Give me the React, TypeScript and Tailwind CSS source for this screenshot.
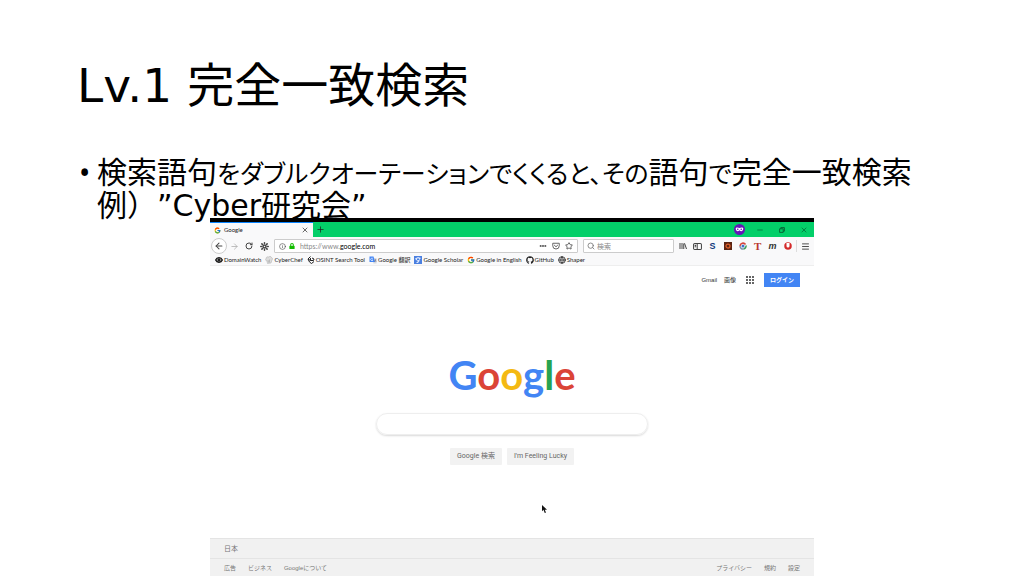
import type { ReactNode } from 'react'
import {
  ArrowLeft,
  ArrowRight,
  Ellipsis,
  Eye,
  Globe,
  Info,
  Menu,
  Minus,
  PanelLeft,
  Plus,
  RotateCw,
  Search,
  Star,
  Sun,
  X,
} from 'lucide-react'
import { FaGithub, FaLock } from 'react-icons/fa'
import { FcGoogle } from 'react-icons/fc'

const PocketIcon = () => (
  <svg viewBox="0 0 16 16" className="size-2" fill="none" stroke="#555" strokeWidth="1.8">
    <path d="M1.5 2.5h13v5a6.5 6.5 0 0 1-13 0z" strokeLinejoin="round" />
    <path d="M4.8 6.5 8 9.5l3.2-3" strokeLinecap="round" />
  </svg>
)

const LibraryIcon = () => (
  <svg viewBox="0 0 16 16" className="size-2" fill="none" stroke="#444" strokeWidth="2">
    <path d="M2 2v12M6 2v12M9.500 3v11M11 2.500 15 14" />
  </svg>
)

const SidebarIcon = () => (
  <svg viewBox="0 0 16 16" className="size-[9px]" fill="none" stroke="#444" strokeWidth="1.8">
    <rect x="1" y="2.500" width="14" height="11" rx="2" />
    <path d="M7.500 3v10M3 6h2.500M3 8.500h2.500" />
  </svg>
)

const HatIcon = () => (
  <svg viewBox="0 0 16 16" className="size-2">
    <path d="M2 5a3.500 3.500 0 0 1 5-3 3.500 3.500 0 0 1 6 1 3 3 0 0 1 1 5l-2 6-7 1-1-5a3 3 0 0 1-2-5z" fill="#ddd" stroke="#aaa" />
    <path d="m6 8 1 5M9 7v6" stroke="#999" />
  </svg>
)

const OsintIcon = () => (
  <svg viewBox="0 0 16 16" className="size-2" fill="none" stroke="#222" strokeWidth="2">
    <path d="M7 1 2 6l3 6 4 3 5-4" />
    <path d="M7 4v5h6l1-3-4-2" />
    <path d="m2 6 5 3" />
  </svg>
)

const TranslateIcon = () => (
  <svg viewBox="0 0 16 16" className="size-2">
    <path d="M6 4h9v11H9z" fill="#d5d9e0" />
    <path d="M1 1h8l3 11H1z" fill="#4285f4" />
    <path d="M8 5.500A2.500 2.500 0 1 0 8 8H5.500" fill="none" stroke="#fff" strokeWidth="1.300" />
    <path d="M11 8h4m-2-1.500V8c0 2-1 3-2 4m1-3 3 3" fill="none" stroke="#667" />
  </svg>
)

const ScholarIcon = () => (
  <svg viewBox="0 0 16 16" className="size-2">
    <path d="M0 0h16v16H0z" fill="#4b80e0" />
    <path d="M2 5 8 2l6 2-3 3v3l-3 4H4l4-4-4-2z" fill="#dce8ff" />
    <path d="M6 5h4v3H6z" fill="#4b80e0" />
  </svg>
)

const MaskIcon = () => (
  <svg viewBox="0 0 22 22" className="size-[11px]">
    <circle cx="11" cy="11" r="11" fill="#6514b8" />
    <path d="M3.500 9c0-3 5-2.500 7.500-1 2.500-1.500 7.500-2 7.500 1 0 6-5 7-7.500 3.500C8.500 16 3.500 15 3.500 9z" fill="#fff" />
    <circle cx="7.500" cy="10.500" r="1.600" fill="#6514b8" />
    <circle cx="14.500" cy="10.500" r="1.600" fill="#6514b8" />
  </svg>
)

const TargetIcon = () => (
  <svg viewBox="0 0 16 16" className="size-2">
    <path d="M0 0h16v16H0z" fill="#5b2412" />
    <circle cx="8" cy="8" r="4" fill="none" stroke="#e0602a" strokeWidth="2.500" />
  </svg>
)

const SwirlIcon = () => (
  <svg viewBox="0 0 16 16" className="size-2" fill="none" strokeWidth="3">
    <path d="M2 8a6 6 0 0 1 11-3" stroke="#d6453d" />
    <path d="M14 7a6 6 0 0 1-5 7" stroke="#3a9a56" />
    <path d="M9 14a6 6 0 0 1-7-6" stroke="#7a8fa8" />
    <circle cx="8" cy="8" r="3" fill="#3f6fc9" />
  </svg>
)

const RedRingIcon = () => (
  <svg viewBox="0 0 16 16" className="size-2">
    <circle cx="8" cy="8" r="7.500" fill="#d42a2a" />
    <path d="M5 2h6v6a3 3 0 0 1-6 0z" fill="#fff" />
  </svg>
)

const AppsIcon = () => (
  <svg viewBox="0 0 8 8" className="size-2" fill="#666">
    {[0, 3, 6].map((y) => [0, 3, 6].map((x) => <path key={`${x}${y}`} d={`M${x} ${y}h2v2h-2z`} />))}
  </svg>
)

const bookmarks: { label: string; icon: ReactNode }[] = [
  { label: 'DomainWatch', icon: <Eye className="size-2" color="#111" strokeWidth={4} /> },
  { label: 'CyberChef', icon: <HatIcon /> },
  { label: 'OSINT Search Tool', icon: <OsintIcon /> },
  { label: 'Google 翻訳', icon: <TranslateIcon /> },
  { label: 'Google Scholar', icon: <ScholarIcon /> },
  { label: 'Google in English', icon: <FcGoogle className="size-2" /> },
  { label: 'GitHub', icon: <FaGithub className="size-2" /> },
  { label: 'Shaper', icon: <Globe className="size-2" color="#444" strokeWidth={3} /> },
]

function IconButton({ label, children }: { label: string; children: ReactNode }) {
  return (
    <button type="button" aria-label={label} className="flex size-[15px] shrink-0 items-center justify-center">
      {children}
    </button>
  )
}

function TabBar() {
  return (
    <div className="flex h-[15px] items-center bg-[#03cf69]">
      <div className="flex h-full w-[103px] items-center gap-[3px] border-t border-[#0a84ff] bg-[#f9f9fa] pl-1">
        <FcGoogle className="size-[7px]" />
        <span className="flex-1">Google</span>
        <IconButton label="タブを閉じる">
          <X className="size-2" strokeWidth={2} />
        </IconButton>
      </div>
      <IconButton label="新しいタブ">
        <Plus className="size-[9px]" strokeWidth={2} />
      </IconButton>
      <div className="ml-auto flex items-center gap-[7px] pr-[3px] text-[#075c32]">
        <MaskIcon />
        <IconButton label="最小化">
          <Minus className="size-2" strokeWidth={2} />
        </IconButton>
        <IconButton label="元に戻す">
          <svg viewBox="0 0 10 10" className="size-[6px]" fill="none" stroke="currentColor" strokeWidth="1.500">
            <path d="M1 3h6v6H1zM3 3V1h6v6H7" />
          </svg>
        </IconButton>
        <IconButton label="閉じる">
          <X className="size-2" strokeWidth={2} />
        </IconButton>
      </div>
    </div>
  )
}

function NavBar() {
  return (
    <div className="flex h-[18px] items-center bg-[#f9f9fa] pr-[1px] pl-[1px] text-[#444]">
      <button
        type="button"
        aria-label="戻る"
        className="flex size-4 shrink-0 items-center justify-center rounded-full border border-[#ccc] bg-white"
      >
        <ArrowLeft className="size-[10px]" strokeWidth={2.5} />
      </button>
      <IconButton label="進む">
        <ArrowRight className="size-[9px] text-[#aaa]" strokeWidth={2} />
      </IconButton>
      <IconButton label="再読み込み">
        <RotateCw className="size-2" strokeWidth={3} />
      </IconButton>
      <IconButton label="設定">
        <Sun className="size-[9px]" strokeWidth={4} />
      </IconButton>

      {/* Address bar */}
      <div className="ml-[2px] flex h-[14px] flex-1 items-center rounded-[1px] border border-[#ccc] bg-white px-1">
        <Info className="size-[7px]" strokeWidth={2} />
        <FaLock className="mx-[3px] size-[6px] text-[#12bc00]" />
        <span className="pl-[2px] text-[7px] text-[#888]">
          https://www.<span className="text-black">google.com</span>
        </span>
        <div className="ml-auto flex items-center gap-[5px]">
          <Ellipsis className="size-2" strokeWidth={4} />
          <PocketIcon />
          <Star className="size-2" strokeWidth={2.5} />
        </div>
      </div>

      <label className="mr-[1px] ml-[5px] flex h-[14px] w-[91px] items-center gap-[2px] rounded-[1px] border border-[#ccc] bg-white pl-[3px]">
        <Search className="size-2 shrink-0 text-[#777]" strokeWidth={2.5} />
        <input aria-label="検索" placeholder="検索" className="w-full min-w-0 text-[7px] outline-none placeholder:text-[#888]" />
      </label>

      <div className="flex items-center">
        <IconButton label="ライブラリー">
          <LibraryIcon />
        </IconButton>
        <IconButton label="サイドバー">
          <SidebarIcon />
        </IconButton>
        <IconButton label="S">
          <span className="font-['Liberation_Sans',sans-serif] text-[9px] font-bold text-[#123a7c]">S</span>
        </IconButton>
        <IconButton label="ターゲット">
          <TargetIcon />
        </IconButton>
        <IconButton label="カラー">
          <SwirlIcon />
        </IconButton>
        <IconButton label="T">
          <span className="font-['Liberation_Serif',serif] text-[11px] font-bold text-[#b9382f]">T</span>
        </IconButton>
        <IconButton label="m">
          <span className="font-['Liberation_Sans',sans-serif] text-[9px] font-bold text-[#333] italic">m</span>
        </IconButton>
        <IconButton label="ブロック">
          <RedRingIcon />
        </IconButton>
        <div className="mx-[1px] h-3 w-px bg-[#ddd]" />
        <IconButton label="メニュー">
          <Menu className="size-[9px]" strokeWidth={2.5} />
        </IconButton>
      </div>
    </div>
  )
}

function GooglePage() {
  return (
    <div className="flex flex-1 flex-col bg-white font-['Liberation_Sans','Noto_Sans_CJK_JP',sans-serif]">
      <div className="flex h-7 items-center justify-end gap-[7px] pr-[14px] text-[#333]">
        <a href="#gmail">Gmail</a>
        <a href="#images">画像</a>
        <button type="button" aria-label="アプリ" className="mx-[3px]">
          <AppsIcon />
        </button>
        <a href="#login" className="flex h-[14px] w-9 items-center justify-center bg-[#4285f4] font-bold text-white">
          ログイン
        </a>
      </div>

      <div className="relative flex flex-1 flex-col items-center pt-14">
        <svg viewBox="0 0 140 56" className="h-14 w-[140px]" role="img" aria-label="Google">
          <text x="70" y="40" textAnchor="middle" className="font-['Lato',sans-serif] text-[40px] font-bold">
            <tspan fill="#4285f4">G</tspan>
            <tspan fill="#db4437">o</tspan>
            <tspan fill="#f4b912">o</tspan>
            <tspan fill="#4285f4">g</tspan>
            <tspan fill="#28a350">l</tspan>
            <tspan fill="#db4437">e</tspan>
          </text>
        </svg>
        <input
          aria-label="Google 検索"
          className="mt-[7px] h-[22px] w-[272px] rounded-full border border-[#eee] px-3 text-[8px] shadow-[0_1px_2px_rgba(0,0,0,0.15)] outline-none"
        />
        <div className="mt-[13px] flex gap-[5px] font-['Roboto','Noto_Sans_CJK_JP',sans-serif] text-[7px] text-[#666]">
          <button type="button" className="h-[17px] w-[52px] rounded-[1px] bg-[#f2f2f2]">
            Google 検索
          </button>
          <button type="button" className="h-[17px] w-[67px] rounded-[1px] bg-[#f2f2f2]">
            I'm Feeling Lucky
          </button>
        </div>

        {/* Mouse pointer */}
        <svg viewBox="0 0 10 16" className="absolute top-[211px] left-[55%] h-2 w-[5px]">
          <path d="M0 0v12.500l3-2.800L5.500 16l2.500-1-2.500-5.500H10z" fill="#111" />
        </svg>
      </div>

      <footer className="bg-[#f1f1f1] text-[#777]">
        <div className="flex h-5 items-center border-t border-[#e4e4e4] pl-[14px] text-[7px]">日本</div>
        <div className="flex h-[18px] items-center justify-between border-t border-[#e4e4e4] px-[14px]">
          <nav className="flex gap-3">
            <a href="#ads">広告</a>
            <a href="#business">ビジネス</a>
            <a href="#about">Googleについて</a>
          </nav>
          <nav className="flex gap-3">
            <a href="#privacy">プライバシー</a>
            <a href="#terms">規約</a>
            <a href="#settings">設定</a>
          </nav>
        </div>
      </footer>
    </div>
  )
}

function BrowserWindow() {
  return (
    <section className="relative -mt-1 ml-[20.5%] flex w-[59%] flex-1 flex-col border-t-4 border-black font-['Lato','Noto_Sans_CJK_JP',sans-serif] text-[6px] leading-none text-[#222]">
      <TabBar />
      <NavBar />
      <div className="flex h-[11px] items-center gap-1 border-b border-[#eee] bg-[#f9f9fa] pl-[5px]">
        {bookmarks.map(({ label, icon }) => (
          <a key={label} href="#bookmark" className="flex items-center gap-px whitespace-nowrap">
            {icon}
            {label}
          </a>
        ))}
      </div>
      <GooglePage />
    </section>
  )
}

// Kana run: set smaller than the kanji around it, with proportional widths
function Kana({ children }: { children: ReactNode }) {
  return <span className="text-[25px] leading-none [font-feature-settings:'palt']">{children}</span>
}

export default function App() {
  return (
    <main className="flex min-h-screen flex-col bg-white font-['DejaVu_Sans','Noto_Sans_CJK_JP',sans-serif] text-black">
      <h1 className="px-[77px] pt-14 text-[47px] leading-[60px]">Lv.1 完全一致検索</h1>
      <ul className="pt-10 pl-[79px] text-[30px] leading-[33px] whitespace-nowrap">
        <li className="flex">
          <span className="w-[18px] font-['Noto_Sans',sans-serif]">•</span>
          <p className="[text-spacing-trim:space-all]">
            検索語句<Kana>をダブルクオーテーションでくくると、その</Kana>語句<Kana>で</Kana>完全一致検索
            <br />
            例）”Cyber研究会”
          </p>
        </li>
      </ul>
      <BrowserWindow />
    </main>
  )
}
